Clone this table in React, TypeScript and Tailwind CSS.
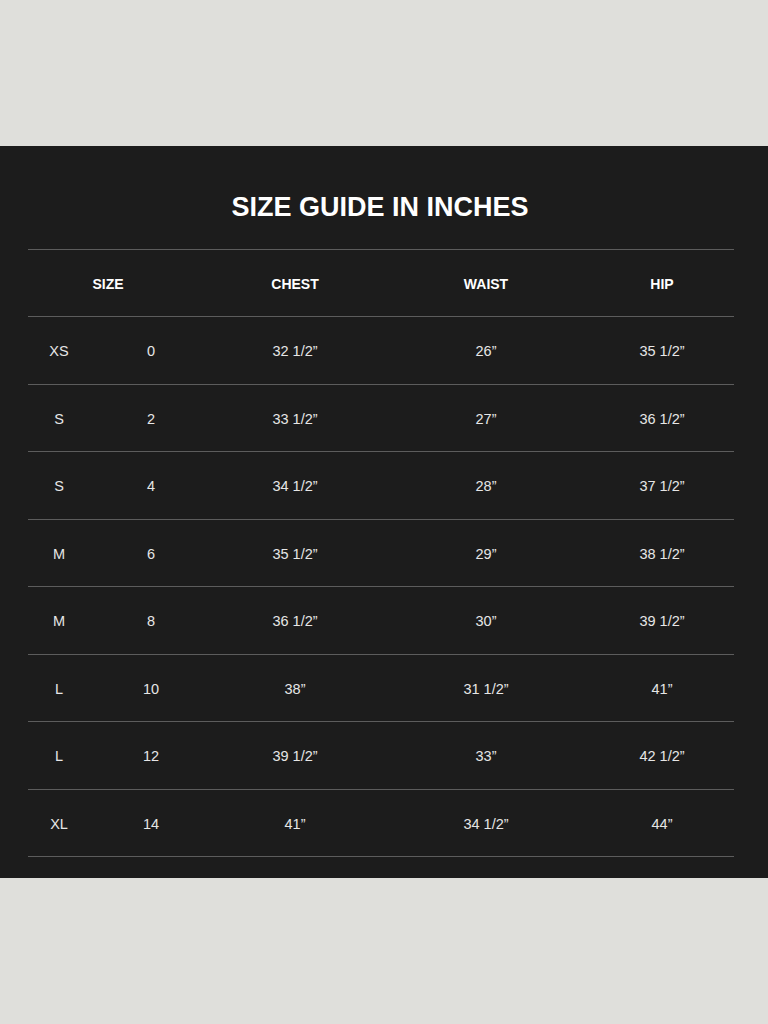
const rows: [string, string, string, string, string][] = [
  ['XS', '0', '32 1/2”', '26”', '35 1/2”'],
  ['S', '2', '33 1/2”', '27”', '36 1/2”'],
  ['S', '4', '34 1/2”', '28”', '37 1/2”'],
  ['M', '6', '35 1/2”', '29”', '38 1/2”'],
  ['M', '8', '36 1/2”', '30”', '39 1/2”'],
  ['L', '10', '38”', '31 1/2”', '41”'],
  ['L', '12', '39 1/2”', '33”', '42 1/2”'],
  ['XL', '14', '41”', '34 1/2”', '44”'],
];

export default function App() {
  return (
    <div className="h-[1024px] w-full bg-[#dfdfdb] pt-[146px] font-['Liberation_Sans',Arial,sans-serif]">
      <div className="h-[732px] bg-[#1c1c1c] pt-[46px]">
        <h1 className="text-center text-[27px] leading-[30px] font-bold text-white pr-[8px]">
          SIZE GUIDE IN INCHES
        </h1>
        <div className="ml-[28px] mt-[27px] w-[706px]">
          {/* header */}
          <div className="grid h-[68px] grid-cols-[160px_190px_216px_136px] items-center border-t border-b border-[#5c5c5c] pt-[2px] text-[14px] font-bold text-white">
            <div className="text-center">SIZE</div>
            <div className="text-center pl-[24px]">CHEST</div>
            <div className="text-center">WAIST</div>
            <div className="text-center">HIP</div>
          </div>
          {rows.map((r, i) => (
            <div
              key={i}
              className="grid h-[67.5px] grid-cols-[62px_122px_166px_216px_136px] items-center border-b border-[#5c5c5c] pt-[4px] text-[14.5px] text-[#e6e6e6]"
            >
              {r.map((c, j) => (
                <div key={j} className="text-center">
                  {c}
                </div>
              ))}
            </div>
          ))}
        </div>
      </div>
    </div>
  );
}
